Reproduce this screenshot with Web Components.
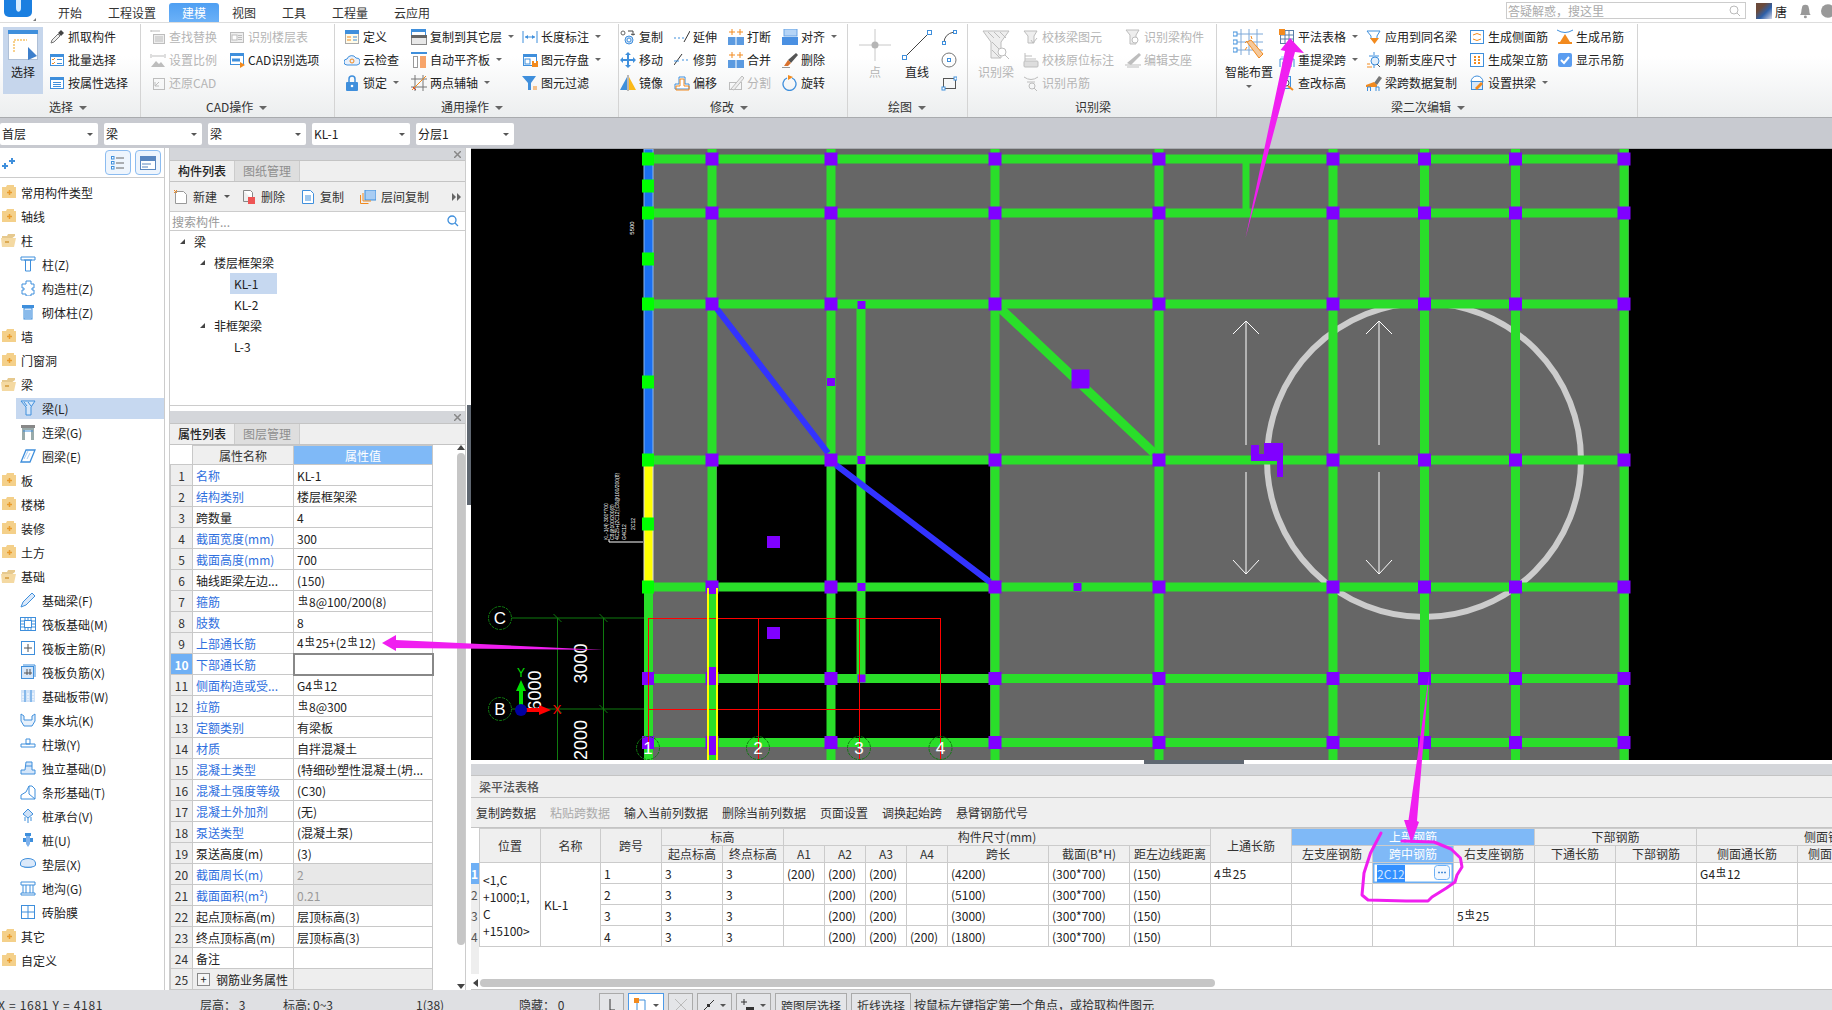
<!DOCTYPE html>
<html lang="zh">
<head>
<meta charset="utf-8">
<title>GTJ</title>
<style>
  html, body { margin: 0; height: 100%; overflow: hidden; background: #fff; }
  body { width: 1832px; height: 1010px; display: flex; flex-direction: column; font: 12px "Noto Sans CJK SC", sans-serif; color: #222; }
  .main { display: flex; height: 842px; flex: none; background: #fff; }
  .ribbon { display: flex; height: 95px; flex: none; background: linear-gradient(#fff 0, #fff 35%, #eceeef 100%); border-bottom: 1px solid #a9abae; box-sizing: border-box; padding-top: 1px; }
  .col { display: flex; flex-direction: column; }
  .right { flex: 1; display: flex; flex-direction: column; min-width: 0; }
</style>
</head>
<body>
<title-bar></title-bar>
<div class="ribbon">
  <rb-group label="选择" lx="46" style="width:141px;padding-left:3px">
    <rb-big icon="select" active style="width:40px;margin-right:6px">选择</rb-big>
    <div class="col" style="width:90px">
      <rb-item icon="pick">抓取构件</rb-item>
      <rb-item icon="batch">批量选择</rb-item>
      <rb-item icon="attr">按属性选择</rb-item>
    </div>
  </rb-group>
  <rb-group label="CAD操作" lx="56" style="width:194px;padding-left:9px">
    <div class="col" style="width:79px">
      <rb-item icon="find" off>查找替换</rb-item>
      <rb-item icon="scale" off>设置比例</rb-item>
      <rb-item icon="restore" off>还原CAD</rb-item>
    </div>
    <div class="col" style="width:100px">
      <rb-item icon="floors" off>识别楼层表</rb-item>
      <rb-item icon="cadopt">CAD识别选项</rb-item>
    </div>
  </rb-group>
  <rb-group label="通用操作" lx="97" style="width:284px;padding-left:9px">
    <div class="col" style="width:67px">
      <rb-item icon="define">定义</rb-item>
      <rb-item icon="cloud">云检查</rb-item>
      <rb-item icon="lock" caret>锁定</rb-item>
    </div>
    <div class="col" style="width:111px">
      <rb-item icon="copyfloor" caret>复制到其它层</rb-item>
      <rb-item icon="align" caret>自动平齐板</rb-item>
      <rb-item icon="twopt" caret>两点辅轴</rb-item>
    </div>
    <div class="col" style="width:90px">
      <rb-item icon="length" caret>长度标注</rb-item>
      <rb-item icon="save" caret>图元存盘</rb-item>
      <rb-item icon="filter">图元过滤</rb-item>
    </div>
  </rb-group>
  <rb-group label="修改" lx="90" style="width:229px;padding-left:1px">
    <div class="col" style="width:54px">
      <rb-item icon="copy">复制</rb-item>
      <rb-item icon="move">移动</rb-item>
      <rb-item icon="mirror">镜像</rb-item>
    </div>
    <div class="col" style="width:54px">
      <rb-item icon="extend">延伸</rb-item>
      <rb-item icon="trim">修剪</rb-item>
      <rb-item icon="offset">偏移</rb-item>
    </div>
    <div class="col" style="width:54px">
      <rb-item icon="break">打断</rb-item>
      <rb-item icon="merge">合并</rb-item>
      <rb-item icon="split" off>分割</rb-item>
    </div>
    <div class="col" style="width:60px">
      <rb-item icon="alignb" caret>对齐</rb-item>
      <rb-item icon="erase">删除</rb-item>
      <rb-item icon="rotate">旋转</rb-item>
    </div>
  </rb-group>
  <rb-group label="绘图" lx="31" style="width:120px;padding-left:9px">
    <rb-big icon="point" off style="width:36px">点</rb-big>
    <rb-big icon="line" style="width:48px">直线</rb-big>
    <div class="col" style="width:22px">
      <rb-item icon="arc"></rb-item>
      <rb-item icon="circle"></rb-item>
      <rb-item icon="rect"></rb-item>
    </div>
  </rb-group>
  <rb-group label="识别梁" lx="98" style="width:249px;padding-left:9px">
    <rb-big icon="recbeam" off style="width:38px;margin-right:8px">识别梁</rb-big>
    <div class="col" style="width:102px">
      <rb-item icon="chkbeam" off>校核梁图元</rb-item>
      <rb-item icon="chkorig" off>校核原位标注</rb-item>
      <rb-item icon="rechang" off>识别吊筋</rb-item>
    </div>
    <div class="col" style="width:90px">
      <rb-item icon="recpart" off>识别梁构件</rb-item>
      <rb-item icon="support" off>编辑支座</rb-item>
    </div>
  </rb-group>
  <rb-group label="梁二次编辑" lx="167" style="width:421px;padding-left:7px">
    <rb-big icon="smart" caret style="width:50px;margin-right:5px">智能布置</rb-big>
    <div class="col" style="width:87px">
      <rb-item icon="table" caret>平法表格</rb-item>
      <rb-item icon="respan" caret>重提梁跨</rb-item>
      <rb-item icon="elev">查改标高</rb-item>
    </div>
    <div class="col" style="width:103px">
      <rb-item icon="applyname">应用到同名梁</rb-item>
      <rb-item icon="refresh">刷新支座尺寸</rb-item>
      <rb-item icon="brush">梁跨数据复制</rb-item>
    </div>
    <div class="col" style="width:88px">
      <rb-item icon="side">生成侧面筋</rb-item>
      <rb-item icon="erect">生成架立筋</rb-item>
      <rb-item icon="arch" caret>设置拱梁</rb-item>
    </div>
    <div class="col" style="width:70px">
      <rb-item icon="hang">生成吊筋</rb-item>
      <rb-item icon="check">显示吊筋</rb-item>
    </div>
  </rb-group>
  <div style="flex:1"></div>
</div>
<combo-bar></combo-bar>
<div class="main">
  <nav-tree></nav-tree>
  <side-panels></side-panels>
  <div class="right">
    <cad-canvas></cad-canvas>
    <span-table></span-table>
  </div>
</div>
<status-bar></status-bar>
<mark-overlay></mark-overlay>

<script>
const B = '#3f8fdc', O = '#f28a1e', D = '#bdbdbd', K = '#555', L = '#a9cdf3';

const win = (c, inner = '') => `<rect x="1.5" y="2.5" width="13" height="11" fill="#fff" stroke="${c}"/><rect x="1" y="2" width="14" height="3" fill="${c}"/>${inner}`;
const lines = (c, x, ys, w) => ys.map(y => `<path d="M${x} ${y}h${w}" stroke="${c}"/>`).join('');

const ICONS = {
  pick: `<path d="M2 14l1-3 6-6 2 2-6 6z" fill="#eee" stroke="#777"/><path d="M9 4l3-3 3 3-3 3z" fill="#444"/>`,
  batch: win(B, `<path d="M3 7l1 1 2-2M3 11l1 1 2-2" stroke="${O}" fill="none"/>${lines(B, 8, [7.5, 11.5], 5)}`),
  attr: win(B, lines(B, 4, [7.5, 9.5, 11.5], 8)),
  find: `<path d="M1 2h9M1 1v2" stroke="${D}"/><rect x="3.5" y="5.5" width="11" height="9" fill="#eee" stroke="${D}"/>${lines(D, 5, [8, 10, 12], 8)}`,
  scale: `<path d="M1 2v4M15 2v4M2 4h12" stroke="${D}"/><path d="M1 15l5-6 3 3 2-2 4 5z" fill="${D}"/>`,
  restore: `<rect x="3.5" y="3.5" width="11" height="11" fill="none" stroke="${D}"/><path d="M5 11l4-4M5 7v4h4" stroke="${D}" fill="none"/>`,
  floors: `<rect x="1.5" y="3.5" width="13" height="10" fill="#eee" stroke="${D}"/><rect x="3" y="6" width="5" height="5" fill="#fff" stroke="${D}"/>${lines(D, 9, [6.5, 8.5, 10.5], 4)}`,
  cadopt: `<rect x="1" y="1" width="14" height="3" fill="${B}"/><rect x="1.5" y="3.5" width="13" height="9" fill="#fff" stroke="${B}"/><path d="M3 8h8" stroke="${B}" stroke-width="3"/><path d="M11 10l5 3-5 3z" fill="${O}"/>`,
  define: `<rect x="1.5" y="1.5" width="13" height="13" fill="#fffbe8" stroke="#aaa"/><rect x="1" y="1" width="14" height="4" fill="${B}"/>${lines(O, 3, [8, 11], 4)}${lines(B, 9, [8, 11], 4)}`,
  cloud: `<path d="M3 13a3 3 0 0 1 0-6 5 5 0 0 1 9-1 3.5 3.5 0 0 1 1 7z" fill="#e8f0fb" stroke="${B}"/><circle cx="8" cy="9" r="2" fill="none" stroke="${O}"/>`,
  lock: `<rect x="2" y="7" width="12" height="9" rx="1" fill="${B}"/><path d="M5 7V4a3 3 0 0 1 6 0v3" fill="none" stroke="${B}" stroke-width="1.5"/><circle cx="8" cy="11" r="1.3" fill="#fff"/>`,
  copyfloor: `<rect x="0.5" y="0.5" width="14" height="8" fill="#fff" stroke="${B}"/><rect x="0" y="0" width="15" height="3" fill="${B}"/><rect x="0.5" y="6.5" width="15" height="9" fill="#e8e8e8" stroke="#888"/><rect x="0" y="6" width="16" height="3" fill="#666"/>`,
  align: `<path d="M0 1h16" stroke="${B}" stroke-width="2"/><rect x="2.5" y="4.5" width="4" height="11" fill="#fff" stroke="#999"/><rect x="9" y="4" width="6" height="12" fill="#f7a46a"/>`,
  twopt: `<path d="M4 0v16M12 0v16M0 4h16M0 12h16" stroke="#777" fill="none"/><path d="M1 15L15 1" stroke="${O}"/><path d="M2 12l3 3" stroke="#c33"/>`,
  length: `<path d="M1 2v12M15 2v12M3 8h10" stroke="${B}"/><path d="M3 8l3-2v4zM13 8l-3-2v4z" fill="${B}"/>`,
  save: `${win(B, `<rect x="3" y="7" width="5" height="5" fill="none" stroke="${B}"/>`)}<rect x="10" y="9" width="6" height="6" fill="${O}"/><rect x="12" y="9" width="2" height="2" fill="#fff"/>`,
  filter: `<path d="M0 1h14L9 8v7H6V8z" fill="${B}"/><path d="M11 12h4M11 14h4" stroke="${O}"/>`,
  copy: `<circle cx="3" cy="4" r="2" fill="none" stroke="#666"/><circle cx="9" cy="11" r="4" fill="#cfe2f8" stroke="${B}"/><circle cx="9" cy="11" r="2" fill="#fff" stroke="${B}"/><path d="M8 2h5v4M11 5l2 1 2-1" stroke="#444" fill="none"/>`,
  move: `<path d="M8 0l3 3H9v4h4V5l3 3-3 3V9H9v4h2l-3 3-3-3h2V9H3v2L0 8l3-3v2h4V3H5z" fill="${B}"/>`,
  mirror: `<path d="M7 15H0l7-13z" fill="${B}"/><path d="M9 15h7L9 2z" fill="#fbb917"/><path d="M8 0v16" stroke="#777"/>`,
  extend: `<path d="M0 9h2M4 9h2M8 9h2" stroke="${B}"/><path d="M10 13L16 2" stroke="#333"/>`,
  trim: `<path d="M0 13L8 2" stroke="#333"/><path d="M0 9h5M8 8h2M12 8h2" stroke="${B}"/>`,
  offset: `<path d="M1 14V9h4V2h6v7h4v5z" fill="#fff" stroke="${B}"/><path d="M2 15v-4h4V4h4v7h5v4z" fill="none" stroke="${O}"/>`,
  break: `<path d="M4 0v6M1 3h6M12 0v6M9 3h6" stroke="${O}"/><rect x="0" y="8" width="7.5" height="8" fill="#5b9ae0"/><rect x="8.5" y="8" width="7.5" height="8" fill="#5b9ae0"/>`,
  merge: `<path d="M4 0v6M1 3h6M12 0v6M9 3h6" stroke="${O}"/><rect x="0" y="8" width="16" height="8" fill="#5b9ae0"/><path d="M8 8v8" stroke="#fff"/>`,
  split: `<rect x="1.5" y="7.5" width="12" height="7" fill="none" stroke="${D}"/><path d="M3 14L14 1l2 2L6 15z" fill="#eee" stroke="${D}"/>`,
  alignb: `<rect x="2" y="0" width="13" height="7" fill="#b5d4f6" stroke="#6aa5e6"/><rect x="0" y="8" width="16" height="8" fill="#4a90e2"/>`,
  erase: `<path d="M14 1l2 2-7 8-3-3z" fill="#555"/><path d="M2 14l4-6 3 3-3 3z" fill="#d9722f"/><path d="M0 16h8" stroke="#333"/>`,
  rotate: `<path d="M10 3a6.5 6.5 0 1 1-5 0" fill="none" stroke="${B}" stroke-width="1.3"/><path d="M6 0l5 2-5 3z" fill="${O}"/>`,
  arc: `<path d="M3 14Q3 5 13 3" fill="none" stroke="#555"/><rect x="1.5" y="12.5" width="3" height="3" fill="#fff" stroke="${B}"/><rect x="12.5" y="1.5" width="3" height="3" fill="#fff" stroke="${B}"/>`,
  circle: `<circle cx="8" cy="8" r="7" fill="none" stroke="#777"/><rect x="6.5" y="6.5" width="3" height="3" fill="#fff" stroke="${B}"/>`,
  rect: `<rect x="2.5" y="3.5" width="12" height="10" fill="none" stroke="#555"/><rect x="1" y="12" width="3" height="3" fill="#fff" stroke="${B}"/><rect x="13" y="2" width="3" height="3" fill="#fff" stroke="${B}"/>`,
  chkbeam: `<path d="M1 2h13l-3 5v7H5V7z" fill="#eee" stroke="${D}"/><path d="M8 11l2 3 4-5" stroke="${D}" fill="none"/>`,
  chkorig: `<path d="M2 1v8" stroke="${D}"/><path d="M2 4h7M2 7h11" stroke="${D}"/><rect x="1" y="9" width="14" height="6" rx="1" fill="#ddd" stroke="${D}"/>`,
  rechang: `<path d="M1 2q7 5 14 0M4 7h8" stroke="${D}" fill="none"/><circle cx="9" cy="11" r="3" fill="none" stroke="${D}"/><path d="M11 13l3 3" stroke="${D}"/>`,
  recpart: `<path d="M1 1h13l-3 5v9H5V6z" fill="#eee" stroke="${D}"/><circle cx="10" cy="11" r="3" fill="#fff" stroke="${D}"/>`,
  support: `<path d="M2 11L14 1l2 2L6 13z" fill="${D}"/><path d="M0 13h16M2 15h12" stroke="${D}"/>`,
  table: `<rect x="1.5" y="1.5" width="13" height="13" fill="#fff" stroke="#5b7fa8"/><path d="M6 1v14M10 1v14M1 6h14M1 10h14" stroke="#5b7fa8"/><rect x="0" y="0" width="6" height="6" fill="${O}"/>`,
  respan: `<path d="M1 15V7h14v8M4 15v-5h3v5M9 15v-5h3v5" fill="none" stroke="${B}"/><path d="M2 5h12" stroke="#9cf"/>`,
  elev: `<rect x="1.5" y="1.5" width="10" height="12" fill="#d8e8fa" stroke="${B}"/><circle cx="7" cy="8" r="3" fill="#fff" stroke="#456"/><path d="M9 11l5 4" stroke="${O}" stroke-width="2"/>`,
  applyname: `<path d="M1 2h13l-3 5v3H5V7z" fill="#fff" stroke="${B}"/><path d="M4 9h9l-4.500 6z" fill="${O}"/>`,
  refresh: `<path d="M8 0v3M8 13v3M3 4h10" stroke="${B}"/><circle cx="9" cy="9" r="4" fill="#e3effc" stroke="${B}"/><path d="M1 12h3M1 15h5" stroke="${O}"/><path d="M11 12l3 3" stroke="#456"/>`,
  brush: `<path d="M8 8l5-7 3 2-5 7z" fill="#777"/><path d="M0 10l8-3 3 3v2H0z" fill="${O}"/><path d="M1.500 16v-4h3v4M10 16v-4h3v4" stroke="${B}" fill="none"/>`,
  side: `<rect x="1.5" y="1.5" width="13" height="13" fill="#fff" stroke="${B}"/><path d="M4 6q4-3 8 0M4 10q4 3 8 0" fill="none" stroke="${O}"/>`,
  erect: `<rect x="1.5" y="1.5" width="13" height="13" fill="#fff" stroke="${B}"/><path d="M5 5h2M9 5h2M5 8h2M9 8h2M5 11h2M9 11h2" stroke="${O}" stroke-width="2"/>`,
  arch: `<path d="M2 7a6 6 0 0 1 12 0" fill="#fff" stroke="${B}"/><rect x="2.500" y="6.500" width="11" height="8" fill="#d9e8f8" stroke="${B}"/><path d="M6 13l6-6 2 2-6 6z" fill="${O}"/>`,
  hang: `<path d="M0 1q8 5 16 0" fill="none" stroke="${B}"/><path d="M8 5l5 8H3z" fill="${O}"/><path d="M1 14h14" stroke="${O}" stroke-width="2"/>`,
  check: `<rect x="1" y="1" width="14" height="14" rx="2" fill="#5b9df0"/><path d="M4 8l3 3 5-6" fill="none" stroke="#fff" stroke-width="2"/>`,
  // large ribbon icons
  select: `<svg width="30" height="30" viewBox="0 0 30 30"><rect x="0.5" y="0.5" width="29" height="29" fill="#fff" stroke="#aebfd6"/><rect width="30" height="4" fill="${B}"/><path d="M6 22V10h13" fill="none" stroke="#f1a31c" stroke-dasharray="2 1"/><path d="M20 17l9 9-9 4z" fill="#3d7fcc"/></svg>`,
  point: `<svg width="32" height="32" viewBox="0 0 32 32"><path d="M16 0v32M0 16h32" stroke="#c8c8c8"/><circle cx="16" cy="16" r="3.500" fill="#b5b5b5"/></svg>`,
  line: `<svg width="32" height="32" viewBox="0 0 32 32"><path d="M4 28L28 4" stroke="#444"/><rect x="1.500" y="26.500" width="4" height="4" fill="#fff" stroke="${B}"/><rect x="26.500" y="1.500" width="4" height="4" fill="#fff" stroke="${B}"/></svg>`,
  recbeam: `<svg width="28" height="30" viewBox="0 0 28 30"><path d="M1 1h26l-8 11v16H9V12z" fill="#eee" stroke="${D}"/><path d="M6 2l6 6M12 2l6 6M18 2l6 6M10 12l8 8M10 20l8 8" stroke="${D}"/><circle cx="20" cy="22" r="4" fill="#fff" stroke="${D}"/><path d="M23 25l4 4" stroke="${D}"/></svg>`,
  smart: `<svg width="32" height="32" viewBox="0 0 32 32"><path d="M8 0v26M16 0v26M24 0v26M2 5h28M2 13h28M2 21h28" stroke="#7da8d8" fill="none"/><rect x="0" y="3" width="4" height="4" fill="#fff" stroke="${B}"/><rect x="0" y="11" width="4" height="4" fill="#fff" stroke="${B}"/><rect x="0" y="19" width="4" height="4" fill="#fff" stroke="${B}"/><path d="M14 13l4-2 12 14-4 4z" fill="#f5c89a" stroke="${O}"/><path d="M12 14l2-2M18 7l1 3M12 21l2-3" stroke="${O}"/></svg>`,
};
const iconSvg = name => ICONS[name].startsWith('<svg') ? ICONS[name] : `<svg width="16" height="16" viewBox="0 0 16 16">${ICONS[name]}</svg>`;

const TREE_ICONS = {
  zhu: `<path d="M1 1h14v3H1zM4 4h8M5.500 4v11h5V4" fill="#fff" stroke="${B}"/>`,
  gz: `<path d="M6 1h5v3h3v4h-2v2h2v4h-3v2H6v-2H2v-4h2V8H2V4h4z" fill="#fff" stroke="${B}"/>`,
  qt: `<path d="M2 1h12v3H2z" fill="${B}"/><rect x="4" y="4" width="8" height="11" fill="#d5e6f9" stroke="${B}"/>${lines(B, 5, [7, 9, 11, 13], 6)}`,
  liang: `<path d="M1 1h14l-4 6v8H6V7z" fill="#d5e6f9" stroke="${B}"/><path d="M4 2l3 4M8 2l3 4" stroke="${B}"/>`,
  lianl: `<path d="M1 1h14v3H1z" fill="#888"/><path d="M2 4v12h3V6h6v10h3V4z" fill="#9aa"/><path d="M3 7h10" stroke="${B}"/>`,
  quanl: `<path d="M1 14L6 2h9l-5 12z" fill="#fff" stroke="${B}" stroke-width="1.300"/><path d="M4 11l4-8M7 11l3-6" stroke="${L}"/>`,
  jcl: `<path d="M1 15l2-5 9-9 3 3-9 9z" fill="#dbe9fa" stroke="${B}"/>`,
  fb: `<rect x="0.500" y="1.500" width="15" height="13" fill="#fff" stroke="${B}"/><rect x="4.500" y="4.500" width="7" height="7" fill="#fff" stroke="${B}"/><path d="M0 5h4M0 8h4M0 11h4M12 5h4M12 8h4M12 11h4M5 1v3M8 1v3M11 1v3M5 12v3M8 12v3M11 12v3" stroke="${B}"/>`,
  fbzj: `<rect x="1.500" y="1.500" width="13" height="13" fill="#fff" stroke="${B}"/><path d="M8 4v8M4 8h8" stroke="${K}"/>`,
  fbfj: `<rect x="1.500" y="2.500" width="12" height="12" fill="#d5e6f9" stroke="${B}"/><path d="M3 1h12v12" fill="none" stroke="${B}"/><path d="M4 9h8M7 5v6M10 5v6" stroke="${K}"/>`,
  jcbd: `<rect x="1" y="2" width="14" height="12" fill="#cfe2f8"/><path d="M5 2v12M11 2v12" stroke="${B}"/><path d="M3 5v7M8 5v7M13 5v7" stroke="#fff" stroke-dasharray="2 1"/>`,
  jsk: `<path d="M1 2l3 2v4h8V4l3-2v7l-3 5H4L1 9z" fill="#e6f0fb" stroke="${B}"/>`,
  zd: `<path d="M6 3h4v5H6zM1 8h14v3H1z" fill="#fff" stroke="${B}"/>`,
  dl: `<path d="M1 10h4l1-8h6v8h3v4H1z" fill="#d5e6f9" stroke="${B}"/><path d="M6 6h6" stroke="${B}"/>`,
  tx: `<path d="M1 15v-4l5-3 3-6h3l3 3v10z" fill="#fff" stroke="${B}"/><path d="M9 2v8l6 5" fill="none" stroke="${B}"/>`,
  zct: `<path d="M8 1l5 5-5 4-5-4z" fill="#cfe2f8" stroke="${B}"/><path d="M5 9v4M8 10v5M11 9v4" stroke="${B}"/>`,
  z: `<rect x="5" y="1" width="6" height="3" fill="${B}"/><path d="M3 6h10v4H3z" fill="${B}"/><path d="M6 4h4v8l-2 3-2-3z" fill="#7fb2ec"/>`,
  dc: `<ellipse cx="8" cy="7" rx="7.500" ry="4.500" fill="#dbe9fa" stroke="${B}"/><path d="M.5 7v2c0 3 15 3 15 0V7" fill="#dbe9fa" stroke="${B}"/>`,
  dg: `<path d="M1 2h14v3H1zM3 5v8M13 5v8M1 13h14v2H1zM6 5v8M10 5v8" fill="#fff" stroke="${B}"/>`,
  ztm: `<rect x="1.500" y="1.500" width="13" height="13" fill="#fff" stroke="${B}"/><path d="M8 2v12M2 8h12" stroke="${B}"/>`,
  plus: `<path d="M1 3h4l1-2h7v2h2v11H1z" fill="#f4d08a"/><path d="M6 8.500h5M8.500 6v5" stroke="#e89a2c" stroke-width="1.500"/>`,
  minus: `<path d="M1 14V4h5l1-2h7v2" fill="#e6c98e"/><path d="M0 6h15l-2 9H1z" fill="#f4d9a2"/><path d="M4 10h4" stroke="#d59a3a" stroke-width="1.500"/>`,
};

// base: every element renders into an open shadow root from css() and html()
class ShadowEl extends HTMLElement {
  connectedCallback() {
    if (this.shadowRoot) return;
    this.attachShadow({ mode: 'open' });
    this.shadowRoot.innerHTML = `<style>${this.css()}</style>${this.html()}`;
  }
}

class TitleBar extends ShadowEl {
  css() {
    return `
      :host{display:flex;height:23px;flex:none;background:#fff;border-bottom:1px solid #ddd;box-sizing:border-box;font:12px "Noto Sans CJK SC",sans-serif;}
      .logo{width:45px;height:22px;flex:none;}
      .tabs{display:flex;padding-top:3px;}
      .tab{height:19px;line-height:19px;padding:0 13px;color:#333;}
      .tab.on{background:linear-gradient(#4e9ff2,#6bb1f8);color:#fff;border-radius:3px 3px 0 0;}
      .r{margin-left:auto;display:flex;align-items:center;height:22px;overflow:hidden;width:326px;flex:none;}
      .search{width:238px;height:15px;border:1px solid #ccc;margin:-1px 10px 0 0;display:flex;align-items:center;justify-content:space-between;color:#aaa;padding:0 4px 0 1px;}
      .av{width:16px;height:16px;background:linear-gradient(135deg,#6b4a3a 30%,#2d5fa8 60%,#d8d8e8);margin-right:3px;}
      .me{width:24px;color:#222;}
      .bell{margin-right:9px;}
    `;
  }
  html() {
    const tabs = ['开始', '工程设置', '建模', '视图', '工具', '工程量', '云应用'];
    return `
      <svg class="logo" viewBox="0 0 45 22"><path d="M4 0h28v12a5 5 0 0 1-5 5H9a5 5 0 0 1-5-5z" fill="#1b7fe0"/><path d="M16 0h5v8c0 5-5 5-5 0z" fill="#d5ecff"/><path d="M36 21h-3l3-3z" fill="#777"/></svg>
      <div class="tabs">${tabs.map(t => `<div class="tab${t === '建模' ? ' on' : ''}">${t}</div>`).join('')}</div>
      <div class="r">
        <div class="search"><span>答疑解惑，搜这里</span><svg width="12" height="12" viewBox="0 0 12 12"><circle cx="5" cy="5" r="4" fill="none" stroke="#bbb"/><path d="M8 8l3 3" stroke="#bbb"/></svg></div>
        <div class="av"></div><div class="me">唐</div>
        <svg class="bell" width="13" height="15" viewBox="0 0 13 15"><path d="M1 11c2-2 1-4 2-7a3.500 3.500 0 0 1 7 0c1 3 0 5 2 7z" fill="#999"/><circle cx="6.500" cy="13" r="1.500" fill="#999"/></svg>
        <svg width="12" height="15" viewBox="0 0 12 15"><circle cx="8" cy="7" r="7" fill="#999"/></svg>
      </div>`;
  }
}

class RbGroup extends ShadowEl {
  css() {
    return `
      :host{display:flex;flex-direction:column;height:93px;box-sizing:border-box;border-right:1px solid #d4d4d4;flex:none;font:12px "Noto Sans CJK SC",sans-serif;}
      .body{display:flex;height:73px;padding-top:1px;box-sizing:border-box;}
      .label{height:20px;line-height:20px;color:#333;white-space:nowrap;}
      .label i{display:inline-block;border:4px solid transparent;border-top:4px solid #666;border-bottom:0;margin-left:6px;vertical-align:2px;}
    `;
  }
  html() {
    const label = this.getAttribute('label');
    const arrow = label === '识别梁' ? '' : '<i></i>';
    return `<div class="body"><slot></slot></div><div class="label" style="margin-left:${this.getAttribute('lx')}px">${label}${arrow}</div>`;
  }
}

class RbItem extends ShadowEl {
  css() {
    return `
      :host{display:flex;align-items:center;height:23px;white-space:nowrap;color:#222;font:12px "Noto Sans CJK SC",sans-serif;}
      :host([off]){color:#b5b5b5;}
      svg{flex:none;margin-right:3px;}
      i{display:inline-block;border:3px solid transparent;border-top:3px solid #666;border-bottom:0;margin-left:6px;}
    `;
  }
  html() {
    const caret = this.hasAttribute('caret') ? '<i></i>' : '';
    return `${iconSvg(this.getAttribute('icon'))}<slot></slot>${caret}`;
  }
}

class RbBig extends ShadowEl {
  css() {
    return `
      :host{display:flex;flex-direction:column;align-items:center;height:67px;margin-top:2px;flex:none;color:#222;white-space:nowrap;font:12px "Noto Sans CJK SC",sans-serif;}
      :host([off]){color:#b5b5b5;}
      :host([active]){background:#c6d6ec;}
      .ic{height:36px;display:flex;align-items:center;justify-content:center;}
      .t{line-height:18px;}
      i{display:block;border:3px solid transparent;border-top:3px solid #666;border-bottom:0;width:0;margin-top:4px;}
    `;
  }
  html() {
    const caret = this.hasAttribute('caret') ? '<i></i>' : '';
    return `<div class="ic">${iconSvg(this.getAttribute('icon'))}</div><div class="t"><slot></slot></div>${caret}`;
  }
}

class ComboBar extends ShadowEl {
  css() {
    return `
      :host{display:flex;height:30px;flex:none;background:#c8cad0;padding:5px 0 0 0;box-sizing:border-box;gap:6px;font:12px "Noto Sans CJK SC",sans-serif;color:#222;}
      div{width:98px;height:22px;line-height:22px;background:#fff;border-radius:2px;padding-left:2px;box-sizing:border-box;position:relative;}
      div::after{content:"";position:absolute;right:5px;top:10px;border:3px solid transparent;border-top:3px solid #555;border-bottom:0;}
    `;
  }
  html() {
    return ['首层', '梁', '梁', 'KL-1', '分层1'].map(t => `<div>${t}</div>`).join('');
  }
}

class NavTree extends ShadowEl {
  css() {
    return `
      :host{display:block;width:165px;flex:none;box-sizing:border-box;border-right:1px solid #ccc;font:12px "Noto Sans CJK SC",sans-serif;color:#222;background:#fff;}
      .top{height:30px;border-bottom:1px solid #ccc;display:flex;align-items:center;box-sizing:border-box;padding:0 3px 0 2px;gap:4px;}
      .top .sp{flex:1;}
      .btn{width:24px;height:23px;border:1px solid #8cbcf0;border-radius:4px;background:#eef5fd;display:flex;align-items:center;justify-content:center;}
      .rows{padding-top:2px;}
      .row{height:24px;display:flex;align-items:center;white-space:nowrap;}
      .row svg{flex:none;}
      .row.p svg{margin:0 4px 0 1px;}
      .row.c .pad{width:16px;height:21px;display:flex;align-items:center;padding-left:4px;margin-left:16px;flex:none;}
      .row.c .txt{padding-left:6px;height:21px;line-height:21px;flex:1;}
      .row.sel .pad,.row.sel .txt{background:#c6d8f0;}
    `;
  }
  html() {
    const data = [
      ['常用构件类型'], ['轴线'], ['柱', 1],
      ['柱(Z)', 'zhu'], ['构造柱(Z)', 'gz'], ['砌体柱(Z)', 'qt'],
      ['墙'], ['门窗洞'], ['梁', 1],
      ['梁(L)', 'liang', 1], ['连梁(G)', 'lianl'], ['圈梁(E)', 'quanl'],
      ['板'], ['楼梯'], ['装修'], ['土方'], ['基础', 1],
      ['基础梁(F)', 'jcl'], ['筏板基础(M)', 'fb'], ['筏板主筋(R)', 'fbzj'], ['筏板负筋(X)', 'fbfj'], ['基础板带(W)', 'jcbd'],
      ['集水坑(K)', 'jsk'], ['柱墩(Y)', 'zd'], ['独立基础(D)', 'dl'], ['条形基础(T)', 'tx'], ['桩承台(V)', 'zct'], ['桩(U)', 'z'], ['垫层(X)', 'dc'], ['地沟(G)', 'dg'], ['砖胎膜', 'ztm'],
      ['其它'], ['自定义'],
    ];
    const svg = n => `<svg width="16" height="16" viewBox="0 0 16 16">${TREE_ICONS[n]}</svg>`;
    const rows = data.map(([t, a, sel]) => {
      if (typeof a === 'string') {
        return `<div class="row c${sel ? ' sel' : ''}"><span class="pad">${svg(a)}</span><span class="txt">${t}</span></div>`;
      }
      return `<div class="row p">${svg(a ? 'minus' : 'plus')}<span>${t}</span></div>`;
    }).join('');
    return `
      <div class="top">
        <svg width="14" height="12" viewBox="0 0 14 12"><path d="M3 6v6M0 9h6M10 1v6M7 4h6" stroke="${B}" stroke-width="2"/></svg>
        <span class="sp"></span>
        <div class="btn"><svg width="14" height="14" viewBox="0 0 14 14"><path d="M5 2h8M5 7h8M5 12h8" stroke="#666"/><rect x="0.500" y="0.500" width="2.500" height="2.500" fill="#fff" stroke="${B}"/><rect x="0.500" y="5.500" width="2.500" height="2.500" fill="#fff" stroke="${B}"/><rect x="0.500" y="10.500" width="2.500" height="2.500" fill="#fff" stroke="${B}"/></svg></div>
        <div class="btn"><svg width="16" height="14" viewBox="0 0 16 14"><rect x="0.500" y="0.500" width="15" height="13" fill="#fff" stroke="#5a87c0"/><rect width="16" height="5" fill="#5a87c0"/><path d="M2 8h9M2 11h6" stroke="#5a87c0"/></svg></div>
      </div>
      <div class="rows">${rows}</div>`;
  }
}

class DockHead extends ShadowEl {
  css() {
    return `
      :host{display:block;font:12px "Noto Sans CJK SC",sans-serif;flex:none;}
      .bar{height:12px;background:#d4d6da;position:relative;}
      .bar svg{position:absolute;right:4px;top:3px;}
      .tabs{display:flex;height:22px;box-sizing:border-box;background:#efefef;border-top:1px solid #c4c4c4;border-bottom:1px solid #c4c4c4;}
      .t{width:64px;text-align:center;line-height:20px;color:#222;font-weight:500;}
      .t.off{background:#dedede;color:#8e8e8e;border-left:1px solid #ccc;border-right:1px solid #ccc;font-weight:400;}
    `;
  }
  html() {
    const [a, b] = this.getAttribute('tabs').split(',');
    return `<div class="bar"><svg width="7" height="7" viewBox="0 0 7 7"><path d="M0 0l7 7M7 0L0 7" stroke="#888" stroke-width="1.500"/></svg></div>
      <div class="tabs"><div class="t">${a}</div><div class="t off">${b}</div></div>`;
  }
}

class SidePanels extends ShadowEl {
  css() {
    return `
      :host{display:flex;width:306px;flex:none;font:12px "Noto Sans CJK SC",sans-serif;color:#222;background:#fff;}
      .col{width:295px;margin:0 1px 0 4px;display:flex;flex-direction:column;flex:none;border:1px solid #ccc;border-width:0 1px;}
      .comp{height:258px;box-sizing:border-box;border-bottom:1px solid #ccc;flex:none;display:flex;flex-direction:column;}
      .tool{height:30px;box-sizing:border-box;background:#efefef;border-bottom:1px solid #ccc;display:flex;align-items:center;padding-left:4px;color:#333;white-space:nowrap;}
      .tool svg{margin-right:5px;flex:none;}
      .tool span{margin-right:16px;}
      .tool i{border:3px solid transparent;border-top:3px solid #555;border-bottom:0;margin:0 12px 0 -9px;}
      .tool b{margin-left:auto;margin-right:3px;font:9px "DejaVu Sans",sans-serif;color:#666;}
      .find{height:19px;box-sizing:border-box;border-bottom:1px solid #ccc;display:flex;align-items:center;justify-content:space-between;padding:0 6px 0 2px;color:#999;}
      ul{list-style:none;margin:0;padding:0;}
      li{height:21px;line-height:21px;display:flex;align-items:center;white-space:nowrap;}
      li em{display:block;width:0;height:0;border-left:5px solid transparent;border-bottom:5px solid #444;margin-right:9px;}
      li.hit span{background:#c6d8f0;display:block;width:47px;height:21px;padding-left:4px;box-sizing:border-box;}
      .prop{height:579px;margin-top:5px;display:flex;flex-direction:column;}
      .handle{width:4px;flex:none;}
      .handle div{width:4px;height:100px;margin-top:257px;background:#5f6771;}
    `;
  }
  html() {
    const treeRows = [
      [10, 1, '梁'], [30, 1, '楼层框架梁'], [64, 0, 'KL-1', 1], [64, 0, 'KL-2'], [30, 1, '非框架梁'], [64, 0, 'L-3'],
    ];
    const rows = treeRows.map(([x, tri, t, hit]) => `<li class="${hit ? 'hit' : ''}" style="padding-left:${hit ? x - 4 : x}px">${tri ? '<em></em>' : ''}<span>${t}</span></li>`).join('');
    return `
      <div class="col">
        <section class="comp">
          <dock-head tabs="构件列表,图纸管理"></dock-head>
          <div class="tool">
            <svg width="14" height="14" viewBox="0 0 14 14"><path d="M1.500 1.500h8l3 3v9h-11z" fill="#fff" stroke="#999"/><path d="M0 3l3-3M0 0l3 3" stroke="${O}"/></svg><span>新建</span><i></i>
            <svg width="14" height="14" viewBox="0 0 14 14"><path d="M1.500 .5h7l2 2v7" fill="#fff" stroke="#888"/><path d="M1.500 .5v11h5" fill="none" stroke="#888"/><rect x="6" y="7" width="7" height="7" fill="#e55"/></svg><span>删除</span>
            <svg width="14" height="14" viewBox="0 0 14 14"><path d="M1.500 .5h8l3 3v10h-11z" fill="#fff" stroke="${B}"/><path d="M4 6h6M4 8h6M4 10h6" stroke="${B}"/></svg><span>复制</span>
            <svg width="16" height="14" viewBox="0 0 16 14"><rect x="5" y="0" width="11" height="10" fill="#a9cdf3" stroke="${B}"/><path d="M3 3v8h8M.5 5v8.500h8" fill="none" stroke="${O}"/></svg><span>层间复制</span>
            <svg width="10" height="8" viewBox="0 0 10 8" style="margin:0 3px 0 auto"><path d="M0 0l4 4-4 4zM5 0l4 4-4 4z" fill="#666"/></svg>
          </div>
          <div class="find"><span>搜索构件...</span><svg width="12" height="12" viewBox="0 0 12 12"><circle cx="5" cy="5" r="4" fill="none" stroke="${B}" stroke-width="1.300"/><path d="M8 8l3 3" stroke="${B}" stroke-width="1.300"/></svg></div>
          <ul>${rows}</ul>
        </section>
        <section class="prop">
          <dock-head tabs="属性列表,图层管理"></dock-head>
          <prop-table></prop-table>
        </section>
      </div>
      <div class="handle"><div></div></div>`;
  }
}

const BAR = '<i class="bar">虫</i>';

class PropTable extends ShadowEl {
  css() {
    return `
      :host{display:flex;flex:1;font:12px "Noto Sans CJK SC",sans-serif;position:relative;min-height:0;}
      table{border-collapse:collapse;table-layout:fixed;width:262px;flex:none;align-self:flex-start;}
      th,td{height:20px;padding:0 0 0 3px;border:1px solid #c8c8c8;white-space:nowrap;overflow:hidden;font-weight:400;box-sizing:border-box;}
      tr{height:21px;}
      thead th{height:19px;text-align:center;background:#efefef;padding:0;color:#333;}
      thead th.v{background:#7fb9f7;color:#fff;}
      thead th:first-child{background:#fff;border:0;}
      td.n{background:#eee;text-align:center;padding:0;color:#333;}
      td.n.on{background:#6fb0f5;color:#fff;font-weight:700;}
      td.lk{color:#2f6fde;}
      td.ro{background:#e8e8e8;color:#999;}
      td.edit{border:2px solid #888;}
      td.more{background:#eee;}
      .plus{display:inline-block;width:11px;height:11px;line-height:10px;border:1px solid #888;text-align:center;margin:0 6px 0 1px;font-size:11px;background:#f6f6f6;vertical-align:1px;}
      .bar{font-style:normal;font-size:10px;position:relative;top:-3px;margin:0 1px;}
      .sb{width:33px;position:relative;flex:none;}
      .sb .th{position:absolute;left:23px;top:8px;bottom:45px;width:8px;background:#c6c6c6;border-radius:4px;}
      .sb .u,.sb .d{position:absolute;left:23px;width:0;height:0;border:4px solid transparent;}
      .sb .u{top:0;border-bottom:5px solid #444;border-top:0;}
      .sb .d{bottom:1px;border-top:5px solid #444;border-bottom:0;}
    `;
  }
  html() {
    // [name, value, name links blue, value read only]
    const rows = [
      ['名称', 'KL-1', 1], ['结构类别', '楼层框架梁', 1], ['跨数量', '4'], ['截面宽度(mm)', '300', 1], ['截面高度(mm)', '700', 1],
      ['轴线距梁左边...', '(150)'], ['箍筋', `${BAR}8@100/200(8)`, 1], ['肢数', '8', 1], ['上部通长筋', `4${BAR}25+(2${BAR}12)`, 1], ['下部通长筋', '', 1],
      ['侧面构造或受...', `G4${BAR}12`, 1], ['拉筋', `${BAR}8@300`, 1], ['定额类别', '有梁板', 1], ['材质', '自拌混凝土', 1], ['混凝土类型', '(特细砂塑性混凝土(坍...', 1],
      ['混凝土强度等级', '(C30)', 1], ['混凝土外加剂', '(无)', 1], ['泵送类型', '(混凝土泵)', 1], ['泵送高度(m)', '(3)'], ['截面周长(m)', '2', 1, 1],
      ['截面面积(m²)', '0.21', 1, 1], ['起点顶标高(m)', '层顶标高(3)'], ['终点顶标高(m)', '层顶标高(3)'], ['备注', ''],
    ];
    const body = rows.map(([name, val, lk, ro], i) => `<tr>
      <td class="n${i === 9 ? ' on' : ''}">${i + 1}</td>
      <td class="${lk ? 'lk' : ''}">${name}</td>
      <td class="${ro ? 'ro' : ''}${i === 9 ? ' edit' : ''}">${val}</td></tr>`).join('');
    return `
      <table>
        <colgroup><col style="width:22px"><col style="width:101px"><col style="width:139px"></colgroup>
        <thead><tr style="height:19px"><th></th><th>属性名称</th><th class="v">属性值</th></tr></thead>
        <tbody>${body}
          <tr><td class="n">25</td><td class="more"><span class="plus">+</span>钢筋业务属性</td><td class="more"></td></tr>
        </tbody>
      </table>
      <div class="sb"><div class="u"></div><div class="th"></div><div class="d"></div></div>`;
  }
}

class CadCanvas extends ShadowEl {
  css() {
    return `
      :host{display:block;height:616px;flex:none;background:#fff;border-top:1px solid #a8abb0;box-sizing:border-box;position:relative;overflow:hidden;}
      svg{display:block;width:1361px;height:611px;}
      .grip{position:absolute;left:673px;bottom:0;width:100px;height:4px;background:#5f6771;}
    `;
  }
  html() {
    const xs = [712, 831, 995, 1159, 1333, 1424.5, 1515.5, 1624];
    const ys = [159, 213, 304, 460, 587, 678.5, 742.5];
    const GR = '#2ade2a', PU = '#8000ff', W = '#fff', TL = '#0f7a0f', RD = '#ff0000';
    const node = (x, y, w = 13, h = 13, c = PU) => `<rect x="${x - w / 2}" y="${y - h / 2}" width="${w}" height="${h}" fill="${c}"/>`;
    const hl = (y, x1, x2, c, w) => `<path d="M${x1} ${y}H${x2}" stroke="${c}" stroke-width="${w}"/>`;
    const vl = (x, y1, y2, c, w) => `<path d="M${x} ${y1}V${y2}" stroke="${c}" stroke-width="${w}"/>`;
    const arrowUp = x => `<path d="M${x} 445V321M${x - 13} 334L${x} 321L${x + 13} 334M${x} 574V472M${x - 13} 560L${x} 574L${x + 13} 560" stroke="${W}" fill="none"/>`;
    const axis = (x, y, t) => `<circle cx="${x}" cy="${y}" r="11.500" fill="none" stroke="${TL}" stroke-dasharray="3 1"/><text x="${x}" y="${y + 6}" fill="${W}" font-size="17" text-anchor="middle">${t}</text>`;
    const vt = (x, y, t, s = 18, anchor = 'middle') => `<text transform="translate(${x} ${y}) rotate(-90)" fill="${W}" font-size="${s}" text-anchor="${anchor}">${t}</text>`;
    const tick = (x, y) => `<path d="M${x - 4} ${y - 4}l8 8" stroke="${TL}"/>`;
    let s = '';
    s += `<rect x="471" y="148" width="1361" height="612" fill="#000"/>`;
    s += `<rect x="648" y="149" width="981" height="611" fill="#666"/>`;
    s += `<rect x="717" y="464" width="273" height="275" fill="#000"/>`;
    s += `<circle cx="1424" cy="460" r="157" fill="none" stroke="#ccc" stroke-width="6"/>`;
    // thin construction lines under the beams
    s += hl(618, 512, 648, TL, 1) + hl(709, 512, 648, TL, 1) + vl(557.500, 618, 760, TL, 1) + vl(603.500, 618, 760, TL, 1);
    s += tick(557.500, 618) + tick(603.500, 618) + tick(557.500, 709) + tick(603.500, 709);
    // beams
    s += vl(648.500, 149, 760, GR, 9);
    ys.forEach(y => { s += hl(y, 648, 1624, GR, 9); });
    xs.forEach(x => { s += vl(x, 149, 760, GR, 9); });
    s += vl(861, 304, 678, GR, 9) + vl(1246, 159, 213, GR, 7);
    s += `<path d="M1001 309L1154 453" stroke="${GR}" stroke-width="9"/>`;
    s += `<path d="M717 309L828 453M836 465L990 582" stroke="#3333ff" stroke-width="6"/>`;
    // edge beam, blue then yellow
    s += `<rect x="644" y="149" width="9" height="306" fill="#1a6ff0" stroke="#8ab8f0"/><rect x="644" y="465" width="9" height="117" fill="#ffff00" stroke="#ddd"/>`;
    // nodes
    [159, 186, 213, 259, 304, 382, 460, 524, 587].forEach(y => { s += node(648, y, 12, 13, '#00ff00'); });
    s += node(648, 678.500, 12, 13) + node(648, 742.500, 12, 13);
    ys.forEach(y => xs.forEach(x => { s += node(x, y); }));
    [305, 460, 587, 678.500].forEach(y => { s += node(861.500, y, 8, 8); });
    s += node(831, 382, 8, 8) + node(1077.500, 587, 8, 8) + node(1080.500, 379, 18, 19) + node(773.500, 542, 13, 12) + node(773.500, 633, 13, 12);
    s += `<path d="M1251 445h8v9h5v-11h19v34h-6v-16h-26z" fill="${PU}"/>`;
    // red drawing lines
    s += `<rect x="648.500" y="618.500" width="292" height="91" fill="none" stroke="${RD}"/>`;
    s += vl(648.500, 618, 745, RD, 1) + vl(758.500, 618, 760, RD, 1) + vl(859.500, 618, 760, RD, 1) + vl(940.500, 618, 760, RD, 1);
    // yellow selection
    s += `<rect x="708" y="589" width="9" height="172" fill="none" stroke="#ffff00" stroke-width="2"/><path d="M708 679h9M708 744h9" stroke="#ffff00"/>`;
    [591, 678.500, 670, 744, 752].forEach(y => { s += node(712.500, y, 7, 6); });
    s += arrowUp(1246) + arrowUp(1379);
    s += axis(500, 618, 'C') + axis(500, 709, 'B') + axis(648, 748, '1') + axis(758, 748, '2') + axis(859, 748, '3') + axis(940.500, 748, '4');
    s += vt(587, 663.500, '3000') + vt(541, 690.500, '6000') + vt(587, 740, '2000');
    // axes gizmo
    s += `<path d="M521 710V689" stroke="#00e000" stroke-width="4"/><path d="M521 680l5 11h-10z" fill="#00e000"/><path d="M521 710h20" stroke="#f00" stroke-width="4"/><path d="M551 710l-12 5v-10z" fill="#f00"/><circle cx="521" cy="710" r="6" fill="#0000a0"/>`;
    s += `<text x="521" y="677" fill="#00e000" font-size="12" text-anchor="middle">Y</text><text x="557" y="714" fill="#f00" font-size="13" text-anchor="middle">X</text>`;
    // small beam annotation
    s += vt(634, 228, '5500', 6);
    s += vt(608, 540, 'KL-1(4) 300*700', 5, 'start') + vt(614, 540, 'C8@100/200(8)', 5, 'start') + vt(619, 540, '4C25+(2C12);C8@100/200(8)', 5, 'start') + vt(626, 540, 'G4C12', 5, 'start') + vt(635, 530, '2C12', 5, 'start');
    s += `<path d="M609 542h34M609 539v3" stroke="${W}"/>`;
    return `<svg viewBox="471 149 1361 611" font-family="'Liberation Sans',sans-serif">${s}</svg>
      <div class="grip"></div>`;
  }
}

class SpanTable extends ShadowEl {
  css() {
    return `
      :host{display:flex;flex-direction:column;flex:1;min-height:0;font:12px "Noto Sans CJK SC",sans-serif;color:#222;background:#fff;}
      .bar{height:11px;background:#d4d6da;flex:none;border-bottom:1px solid #c4c4c4;}
      .title{height:21px;line-height:21px;background:#efefef;border-bottom:1px solid #c4c4c4;padding-left:8px;color:#555;font-weight:500;flex:none;}
      .tool{height:29px;background:#efefef;border-bottom:1px solid #c4c4c4;display:flex;align-items:center;padding-left:5px;flex:none;color:#333;white-space:nowrap;}
      .tool span{margin-right:14px;}
      .tool .off{color:#aaa;}
      .wrap{flex:1;display:flex;overflow:hidden;min-height:0;}
      .gut{width:8px;flex:none;background:#eee;font-size:12px;}
      .gut .sp{height:35px;background:#fff;}
      .gut div{height:21px;line-height:21px;color:#555;overflow:hidden;}
      .gut .on{background:#6fb0f5;color:#fff;font-weight:700;}
      .tbl{flex:1;overflow:hidden;min-width:0;}
      table{border-collapse:collapse;table-layout:fixed;width:1420px;}
      th,td{border:1px solid #cbcbcb;padding:0 0 0 3px;white-space:nowrap;overflow:hidden;font-weight:400;box-sizing:border-box;}
      th{background:#efefef;text-align:center;padding:0;height:17px;line-height:16px;color:#333;}
      th.blue{background:#7fb9f7;color:#fff;}
      tbody td{height:21px;}
      td.pos{line-height:17px;}
      .bar2{font-style:normal;font-size:10px;position:relative;top:-3px;margin:0 1px;}
      .ed{box-shadow:inset 0 0 0 1.500px #6db0f5;padding:0 2px 0 4px;position:relative;}
      .ed b{background:#3390ff;color:#cfe4ff;font-weight:400;}
      .ed svg{position:absolute;right:3px;top:2px;}
      .scroll{height:13px;flex:none;display:flex;align-items:center;padding:2px 0 0 2px;border-bottom:1px solid #c4c4c4;}
      .scroll em{width:0;height:0;border:4px solid transparent;border-right:5px solid #444;border-left:0;margin-right:2px;}
      .scroll div{width:735px;height:8px;background:#c6c6c6;border-radius:4px;}
    `;
  }
  html() {
    const widths = [61, 60, 61, 61, 61, 41, 41, 41, 41, 101, 81, 81, 81, 81, 81, 81, 81, 81, 101, 81, 81, 60];
    const cols = widths.map(w => `<col style="width:${w}px">`).join('');
    const bar = `<i class="bar2">虫</i>`;
    const dots = `<svg width="16" height="15" viewBox="0 0 16 15"><rect x="0.500" y="0.500" width="15" height="14" rx="3" fill="#f2f8ff" stroke="#6db0f5"/><path d="M4 7.500h2M7 7.500h2M10 7.500h2" stroke="#4d8fd8" stroke-width="1.500"/></svg>`;
    const sp = (a1, a4, len) => [a1, '(200)', '(200)', a4, len, '(300*700)', '(150)'];
    const body = [
      ['1', sp('(200)', '', '(4200)'), `4${bar}25`, '', `<b>2C12</b>${dots}`, '', '', '', `G4${bar}12`],
      ['2', sp('', '', '(5100)'), '', '', '', '', '', '', ''],
      ['3', sp('', '', '(3000)'), '', '', '', `5${bar}25`, '', '', ''],
      ['4', sp('', '(200)', '(1800)'), '', '', '', '', '', '', ''],
    ].map(([n, dims, up, l, mid, r, d1, d2, s1], i) => {
      const head = i === 0 ? `<td rowspan="4" class="pos">&lt;1,C<br>+1000;1,<br>C<br>+15100&gt;</td><td rowspan="4">KL-1</td>` : '';
      return `<tr>${head}<td>${n}</td><td>3</td><td>3</td>${dims.map(v => `<td>${v}</td>`).join('')}
        <td>${up}</td><td>${l}</td><td class="${i === 0 ? 'ed' : ''}">${mid}</td><td>${r}</td><td>${d1}</td><td>${d2}</td><td>${s1}</td><td></td><td></td></tr>`;
    }).join('');
    return `
      <div class="bar"></div>
      <div class="title">梁平法表格</div>
      <div class="tool"><span>复制跨数据</span><span class="off">粘贴跨数据</span><span>输入当前列数据</span><span>删除当前列数据</span><span>页面设置</span><span>调换起始跨</span><span>悬臂钢筋代号</span></div>
      <div class="wrap">
        <div class="gut"><div class="sp"></div><div class="on">1</div><div>2</div><div>3</div><div>4</div></div>
        <div class="tbl">
          <table>
            <colgroup>${cols}</colgroup>
            <thead>
              <tr>
                <th rowspan="2">位置</th><th rowspan="2">名称</th><th rowspan="2">跨号</th>
                <th colspan="2">标高</th><th colspan="7">构件尺寸(mm)</th><th rowspan="2">上通长筋</th>
                <th colspan="3" class="blue">上部钢筋</th><th colspan="2">下部钢筋</th><th colspan="3">侧面钢筋</th>
              </tr>
              <tr>
                <th>起点标高</th><th>终点标高</th><th>A1</th><th>A2</th><th>A3</th><th>A4</th><th>跨长</th><th>截面(B*H)</th><th>距左边线距离</th>
                <th>左支座钢筋</th><th class="blue">跨中钢筋</th><th>右支座钢筋</th><th>下通长筋</th><th>下部钢筋</th><th>侧面通长筋</th><th>侧面原位筋</th><th></th>
              </tr>
            </thead>
            <tbody>${body}</tbody>
          </table>
        </div>
      </div>
      <div class="scroll"><em></em><div></div></div>`;
  }
}

class StatusBar extends ShadowEl {
  css() {
    return `
      :host{display:flex;align-items:flex-start;height:20px;flex:none;padding-top:3px;box-sizing:border-box;background:#dfe0e3;font:12px/23px "Noto Sans CJK SC",sans-serif;color:#333;white-space:nowrap;overflow:hidden;}
      .t{flex:none;}
      .pos{margin-left:-2px;letter-spacing:.7px;}
      .btn{height:24px;box-sizing:border-box;border:1px solid #aaa;background:#e4e5e8;margin-right:4px;display:flex;align-items:center;justify-content:center;flex:none;}
      .btn.sel{background:#fff;border:1px solid #4d9ae8;}
      .btn i{border:3px solid transparent;border-top:3px solid #555;border-bottom:0;margin-left:5px;}
    `;
  }
  html() {
    const at = (w, t) => `<span class="t" style="width:${w}px">${t}</span>`;
    return `
      <span class="t pos" style="width:202px">X = 1681 Y = 4181</span>${at(83, '层高： 3')}${at(133, '标高: 0~3')}${at(103, '1(38)')}${at(80, '隐藏： 0')}
      <div class="btn" style="width:25px"><svg width="10" height="14" viewBox="0 0 10 14"><path d="M3 1v11h5" fill="none" stroke="#333"/></svg></div>
      <div class="btn sel" style="width:36px"><svg width="14" height="14" viewBox="0 0 14 14"><path d="M3 2h8v12M3 2v12" fill="none" stroke="${B}"/><rect width="5" height="5" fill="${O}"/></svg><i></i></div>
      <div class="btn" style="width:25px"><svg width="14" height="14" viewBox="0 0 14 14"><path d="M1 1l12 12M13 1L1 13" stroke="#bbb"/></svg></div>
      <div class="btn" style="width:35px"><svg width="12" height="12" viewBox="0 0 12 12"><path d="M1 11L11 1" stroke="#333"/><rect x="4" y="5" width="3" height="3" fill="#333"/></svg><i></i></div>
      <div class="btn" style="width:35px"><svg width="14" height="12" viewBox="0 0 14 12"><path d="M3 0v6M0 3h6" stroke="#333"/><rect x="5" y="8" width="8" height="3" fill="#333"/></svg><i></i></div>
      <div class="btn" style="width:72px">跨图层选择</div>
      <div class="btn" style="width:60px;margin-right:3px">折线选择</div>
      <span class="t">按鼠标左键指定第一个角点，或拾取构件图元</span>`;
  }
}

// magenta hand annotations, lying over everything
class MarkOverlay extends ShadowEl {
  css() {
    return `:host{position:fixed;left:0;top:0;width:1832px;height:1010px;pointer-events:none;display:block;} svg{display:block;}`;
  }
  html() {
    const M = '#f01ef0';
    return `<svg width="1832" height="1010" viewBox="0 0 1832 1010">
      <polygon fill="${M}" points="1290,38 1304,53 1295,52 1245.500,238 1285,51 1280.500,50"/>
      <polygon fill="${M}" points="1429,675 1417,821 1419,822 1411.500,843 1404,820 1408.500,820"/>
      <polygon fill="${M}" points="382,643 396,635 396,640 604,650 396,648 396,651"/>
      <polyline fill="none" stroke="${M}" stroke-width="3" stroke-linejoin="round" stroke-linecap="round" points="1381,833 1370.500,853 1364,873 1362,895 1368,900 1406,901 1428,901 1432,897 1446.500,888 1455,882 1457,875 1462,867 1460.400,858 1451,849 1434,842 1402,841"/>
    </svg>`;
  }
}

customElements.define('title-bar', TitleBar);
customElements.define('rb-group', RbGroup);
customElements.define('rb-item', RbItem);
customElements.define('rb-big', RbBig);
customElements.define('combo-bar', ComboBar);
customElements.define('nav-tree', NavTree);
customElements.define('dock-head', DockHead);
customElements.define('side-panels', SidePanels);
customElements.define('prop-table', PropTable);
customElements.define('cad-canvas', CadCanvas);
customElements.define('span-table', SpanTable);
customElements.define('status-bar', StatusBar);
customElements.define('mark-overlay', MarkOverlay);
</script>
</body>
</html>
